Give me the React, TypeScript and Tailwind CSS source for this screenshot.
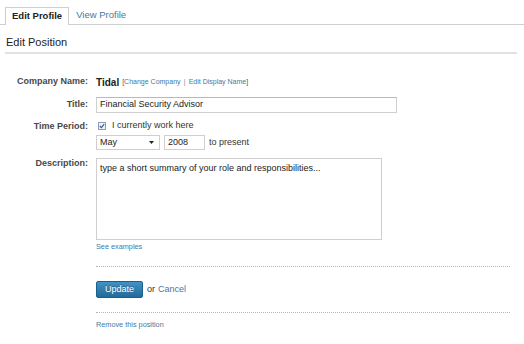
import React from "react";

const F = { fontFamily: '"Liberation Sans", Arial, sans-serif' };

export default function App() {
  return (
    <div className="w-[524px] h-[344px] bg-white overflow-hidden text-[#333]" style={F}>
      {/* Tabs */}
      <div className="flex items-end pt-[7px] border-b border-[#cfcfcf]">
        <div className="ml-[5px] -mb-px h-[18px] px-[6px] border border-b-0 border-[#cfcfcf] bg-white flex items-center text-[9.5px] font-bold text-[#222]">
          Edit Profile
        </div>
        <div className="ml-[7px] h-[17px] flex items-center text-[9.5px] text-[#3f78a8]">View Profile</div>
      </div>

      {/* Heading */}
      <div className="mx-[5px] mr-[7px] pt-[10px] pb-[3px] pl-px border-b-2 border-[#e1e1e1] text-[11px] leading-[14px] text-[#222]">
        Edit Position
      </div>

      {/* Form */}
      <div className="mt-[22px]">
        {/* Company */}
        <div className="flex items-center h-[12px]">
          <div className="w-[88px] text-right text-[9px] font-bold text-[#484848]">Company Name:</div>
          <div className="ml-[8px] flex items-center">
            <span className="text-[10px] font-bold text-[#222]">Tidal</span>
            <span className="ml-[3px] text-[7px] text-[#555]">[</span>
            <span className="text-[7px] text-[#3f78a8]">Change Company</span>
            <span className="mx-[3px] text-[8px] text-[#999]">|</span>
            <span className="text-[7px] text-[#3f78a8]">Edit Display Name</span>
            <span className="text-[7px] text-[#555]">]</span>
          </div>
        </div>

        {/* Title */}
        <div className="flex items-center mt-[9px]">
          <div className="w-[88px] text-right text-[9px] font-bold text-[#484848]">Title:</div>
          <div className="ml-[8px] w-[301px] h-[16px] border border-[#cfcfcf] border-t-[#b9b9b9] flex items-center pl-[3px] text-[9px] text-[#222]">
            Financial Security Advisor
          </div>
        </div>

        {/* Time period */}
        <div className="flex mt-[8px]">
          <div className="w-[88px] text-right text-[9px] leading-[10px] font-bold text-[#484848]">Time Period:</div>
          <div className="ml-[8px]">
            <div className="flex items-center h-[10px]">
              <span className="ml-[2px] w-[8px] h-[8px] border border-[#8a9fb8] bg-[#eef1f5] flex items-center justify-center">
                <svg width="6" height="6" viewBox="0 0 6 6">
                  <path d="M0.8 3 L2.4 4.6 L5.2 1.2" stroke="#3a5a8a" strokeWidth="1.1" fill="none" />
                </svg>
              </span>
              <span className="ml-[6px] text-[9px] text-[#333]">I currently work here</span>
            </div>
            <div className="flex items-center mt-[4px]">
              <div className="w-[64px] h-[15px] border border-[#cfcfcf] flex items-center justify-between pl-[3px] pr-[5px] text-[9px] text-[#222]">
                <span>May</span>
                <svg width="5" height="3" viewBox="0 0 5 3">
                  <path d="M0 0 L5 0 L2.5 3 Z" fill="#222" />
                </svg>
              </div>
              <div className="ml-[4px] w-[41px] h-[15px] border border-[#cfcfcf] flex items-center pl-[3px] text-[9px] text-[#222]">
                2008
              </div>
              <span className="ml-[4px] text-[9px] text-[#333]">to present</span>
            </div>
          </div>
        </div>

        {/* Description */}
        <div className="flex mt-[8px]">
          <div className="w-[88px] text-right text-[9px] leading-[10px] font-bold text-[#484848]">Description:</div>
          <div className="ml-[8px] w-[286px] h-[82px] border border-[#cfcfcf] pt-[4px] pl-[3px] text-[9px] leading-[10px] text-[#222]">
            type a short summary of your role and responsibilities...
          </div>
        </div>

        <div className="ml-[96px]">
          <div className="mt-[2px] text-[7.3px] leading-[10px] text-[#3f78a8]">See examples</div>
          <div className="mt-[14px] w-[414px] border-t border-dotted border-[#b5b5b5]" />
          <div className="mt-[14px] flex items-center">
            <div className="w-[47px] h-[17px] rounded-[2px] border border-[#1b5f8c] bg-gradient-to-b from-[#3f93c6] to-[#216b9b] flex items-center justify-center text-[9px] text-white [text-shadow:0_-1px_0_rgba(0,0,0,0.3)]">
              Update
            </div>
            <span className="ml-[4px] text-[9px] text-[#333]">or</span>
            <span className="ml-[3px] text-[9px] text-[#3f78a8]">Cancel</span>
          </div>
          <div className="mt-[14px] w-[414px] border-t border-dotted border-[#b5b5b5]" />
          <div className="mt-[7px] text-[7.3px] leading-[10px] text-[#3f78a8]">Remove this position</div>
        </div>
      </div>
    </div>
  );
}
